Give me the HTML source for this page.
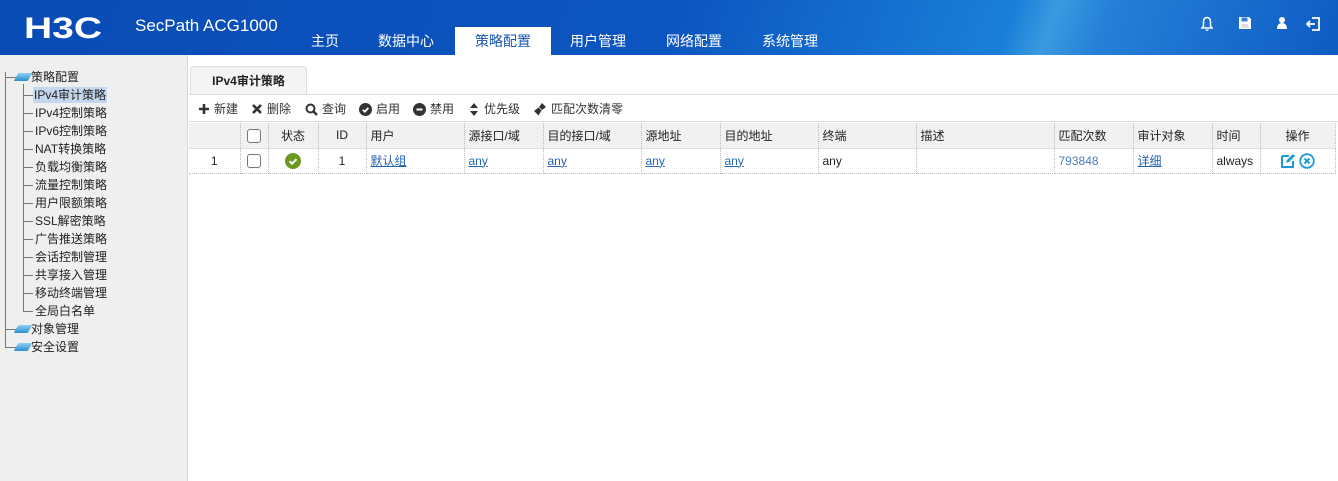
<!DOCTYPE html>
<html><head><meta charset="utf-8">
<style>
*{margin:0;padding:0;box-sizing:border-box}
body{width:1338px;height:481px;overflow:hidden;font-family:"Liberation Sans","Noto Sans CJK SC",sans-serif;font-size:12px;color:#222;background:#fff;position:relative}
.hdr{position:absolute;left:0;top:0;width:1338px;height:55px;background:linear-gradient(110deg,#0a4bb5 0%,#0c55c0 50%,#1a7fd8 75%,#3a9ae0 78%,#2580d8 82%,#0e5bc3 100%)}
.logo{position:absolute;left:24px;top:12px;color:#fff;font:bold 30px "Liberation Sans",sans-serif;letter-spacing:0px;transform:scaleX(1.3);transform-origin:left}
.prod{position:absolute;left:135px;top:16px;color:#fff;font-size:17px}
.nav{position:absolute;top:27px;height:28px;line-height:28px;color:#fff;font-size:14px;text-align:center}
.nav.on{background:#fff;color:#1a56b0}
.ico{position:absolute;top:16px}
.side{position:absolute;left:0;top:55px;width:188px;height:426px;background:#efefef;border-right:1px solid #d6d6d6}
.tr{position:absolute;font-size:12px;color:#222;line-height:16px}
.vl{position:absolute;border-left:1px solid #777}
.hl{position:absolute;border-top:1px solid #777;width:10px}
.fold{position:absolute;width:14px;height:8px;background:linear-gradient(#8fd0f5,#2a8fd0);transform:skewX(-30deg);border-radius:1px}
.tab{position:absolute;left:190px;top:66px;width:117px;height:29px;border:1px solid #ddd;border-bottom:none;border-radius:4px 4px 0 0;background:#f4f4f4;font-weight:bold;font-size:12px;text-align:center;line-height:28px}
.bar{position:absolute;left:189px;top:94px;width:1149px;height:28px;background:#fff;border-top:1px solid #ddd;border-bottom:1px solid #ddd}
.tb{position:absolute;top:6px;font-size:12px;color:#333;line-height:16px;display:flex;align-items:center}
.tb svg{margin-right:4px}
table{position:absolute;left:189px;top:123px;border-collapse:collapse;table-layout:fixed}
td{border-right:1px dotted #bbb;height:25px;font-size:12px;padding:0 4px;white-space:nowrap}
tr.h td{background:#f1f1f1;border-bottom:1px solid #ddd}
tr.d td{border-bottom:1px dotted #bbb}
.c{text-align:center}
a{color:#2563b5;text-decoration:underline}
.cb{display:inline-block;width:14px;height:14px;border:1px solid #777;border-radius:3px;background:#fff;vertical-align:middle}
</style></head><body>
<div class="hdr">
 <div class="logo">H3C</div>
 <div class="prod">SecPath ACG1000</div>
 <div class="nav" style="left:290px;width:70px">主页</div>
 <div class="nav" style="left:370px;width:72px">数据中心</div>
 <div class="nav on" style="left:455px;width:96px">策略配置</div>
 <div class="nav" style="left:560px;width:76px">用户管理</div>
 <div class="nav" style="left:656px;width:76px">网络配置</div>
 <div class="nav" style="left:752px;width:76px">系统管理</div>
 <svg class="ico" style="left:1200px" width="14" height="16" viewBox="0 0 14 16"><path d="M7 1.5C4.5 1.5 3.5 3.5 3.5 6v4L2 12h10l-1.5-2V6c0-2.5-1-4.5-3.5-4.5z" fill="none" stroke="#fff" stroke-width="1.5"/><path d="M5.5 13.5a1.5 1.5 0 0 0 3 0" fill="#fff"/></svg>
 <svg class="ico" style="left:1238px" width="14" height="14" viewBox="0 0 14 14"><path d="M1 1h10l2 2v10H1z" fill="#fff"/><rect x="3.5" y="1.5" width="6" height="4" fill="#3a7dd0"/><rect x="3.5" y="8" width="7" height="4" fill="#dde"/></svg>
 <svg class="ico" style="left:1276px" width="12" height="14" viewBox="0 0 12 14"><circle cx="6" cy="4" r="3" fill="#fff"/><path d="M1 13c0-4 2-6 5-6s5 2 5 6z" fill="#fff"/></svg>
 <svg class="ico" style="left:1305px" width="16" height="16" viewBox="0 0 16 16"><path d="M7 2h7v12H7" fill="none" stroke="#fff" stroke-width="1.8"/><path d="M10 8H2M5 5L2 8l3 3" fill="none" stroke="#fff" stroke-width="1.8"/></svg>
</div>
<div class="side">
 <div class="vl" style="left:5px;top:17px;height:275px"></div>
 <div class="hl" style="left:5px;top:22px;width:12px"></div><div class="fold" style="left:16px;top:18px"></div><div class="tr" style="left:31px;top:14px">策略配置</div>
 <div class="vl" style="left:23px;top:29px;height:227px"></div>
 <div class="hl" style="left:23px;top:40px"></div><div class="tr" style="left:33px;top:32px;background:#c5d7ee;padding:0 1px">IPv4审计策略</div>
 <div class="hl" style="left:23px;top:58px"></div><div class="tr" style="left:35px;top:50px">IPv4控制策略</div>
 <div class="hl" style="left:23px;top:76px"></div><div class="tr" style="left:35px;top:68px">IPv6控制策略</div>
 <div class="hl" style="left:23px;top:94px"></div><div class="tr" style="left:35px;top:86px">NAT转换策略</div>
 <div class="hl" style="left:23px;top:112px"></div><div class="tr" style="left:35px;top:104px">负载均衡策略</div>
 <div class="hl" style="left:23px;top:130px"></div><div class="tr" style="left:35px;top:122px">流量控制策略</div>
 <div class="hl" style="left:23px;top:148px"></div><div class="tr" style="left:35px;top:140px">用户限额策略</div>
 <div class="hl" style="left:23px;top:166px"></div><div class="tr" style="left:35px;top:158px">SSL解密策略</div>
 <div class="hl" style="left:23px;top:184px"></div><div class="tr" style="left:35px;top:176px">广告推送策略</div>
 <div class="hl" style="left:23px;top:202px"></div><div class="tr" style="left:35px;top:194px">会话控制管理</div>
 <div class="hl" style="left:23px;top:220px"></div><div class="tr" style="left:35px;top:212px">共享接入管理</div>
 <div class="hl" style="left:23px;top:238px"></div><div class="tr" style="left:35px;top:230px">移动终端管理</div>
 <div class="hl" style="left:23px;top:256px"></div><div class="tr" style="left:35px;top:248px">全局白名单</div>
 <div class="hl" style="left:5px;top:274px;width:12px"></div><div class="fold" style="left:16px;top:270px"></div><div class="tr" style="left:31px;top:266px">对象管理</div>
 <div class="hl" style="left:5px;top:292px;width:12px"></div><div class="fold" style="left:16px;top:288px"></div><div class="tr" style="left:31px;top:284px">安全设置</div>
</div>
<div class="tab">IPv4审计策略</div>
<div class="bar">
 <div class="tb" style="left:9px"><svg width="12" height="12" viewBox="0 0 12 12"><path d="M6 1v10M1 6h10" stroke="#333" stroke-width="2.6"/></svg>新建</div>
 <div class="tb" style="left:62px"><svg width="12" height="12" viewBox="0 0 12 12"><path d="M2 2l8 8M10 2l-8 8" stroke="#333" stroke-width="2.6"/></svg>删除</div>
 <div class="tb" style="left:116px"><svg width="13" height="13" viewBox="0 0 13 13"><circle cx="5.5" cy="5.5" r="4" fill="none" stroke="#333" stroke-width="2"/><path d="M8.5 8.5l3.5 3.5" stroke="#333" stroke-width="2.4"/></svg>查询</div>
 <div class="tb" style="left:170px"><svg width="13" height="13" viewBox="0 0 13 13"><circle cx="6.5" cy="6.5" r="6.5" fill="#333"/><path d="M3.8 6.7l2 2 3.6-3.8" fill="none" stroke="#fff" stroke-width="1.8"/></svg>启用</div>
 <div class="tb" style="left:224px"><svg width="13" height="13" viewBox="0 0 13 13"><circle cx="6.5" cy="6.5" r="6.5" fill="#333"/><path d="M3.5 6.5h6" stroke="#fff" stroke-width="2"/></svg>禁用</div>
 <div class="tb" style="left:279px"><svg width="12" height="13" viewBox="0 0 12 13"><path d="M6 0L10 5H2zM6 13L2 8h8z" fill="#333"/></svg>优先级</div>
 <div class="tb" style="left:344px"><svg width="14" height="14" viewBox="0 0 14 14"><path d="M9 1l4 4-4 3-3-3z" fill="#333"/><path d="M5.5 5.5l3 3-3 5L1 9z" fill="#333"/></svg>匹配次数清零</div>
</div>
<table>
<colgroup><col width="51"><col width="28"><col width="50"><col width="48"><col width="98"><col width="79"><col width="98"><col width="79"><col width="98"><col width="98"><col width="138"><col width="79"><col width="79"><col width="48"><col width="75"></colgroup>
<tr class="h"><td></td><td class="c"><span class="cb"></span></td><td class="c">状态</td><td class="c">ID</td><td>用户</td><td>源接口/域</td><td>目的接口/域</td><td>源地址</td><td>目的地址</td><td>终端</td><td>描述</td><td>匹配次数</td><td>审计对象</td><td>时间</td><td class="c">操作</td></tr>
<tr class="d"><td class="c">1</td><td class="c"><span class="cb"></span></td><td class="c"><svg width="16" height="16" viewBox="0 0 16 16" style="vertical-align:middle"><circle cx="8" cy="8" r="8" fill="#6a9a1f"/><path d="M4.5 8.2l2.5 2.5 4.5-4.5" fill="none" stroke="#fff" stroke-width="2"/></svg></td><td class="c">1</td><td><a>默认组</a></td><td><a>any</a></td><td><a>any</a></td><td><a>any</a></td><td><a>any</a></td><td>any</td><td></td><td style="color:#4a7cc0">793848</td><td><a>详细</a></td><td>always</td><td class="c"><svg width="16" height="16" viewBox="0 0 16 16" style="vertical-align:middle"><path d="M2 3h7M2 3v11h11V8" fill="none" stroke="#1e9ad6" stroke-width="2"/><path d="M6 10l1-3 6-6 2 2-6 6z" fill="#1e9ad6"/></svg> <svg width="16" height="16" viewBox="0 0 16 16" style="vertical-align:middle"><circle cx="8" cy="8" r="6.8" fill="none" stroke="#1e9ad6" stroke-width="1.8"/><path d="M5.5 5.5l5 5M10.5 5.5l-5 5" stroke="#1e9ad6" stroke-width="2"/></svg></td></tr>
</table>
</body></html>
